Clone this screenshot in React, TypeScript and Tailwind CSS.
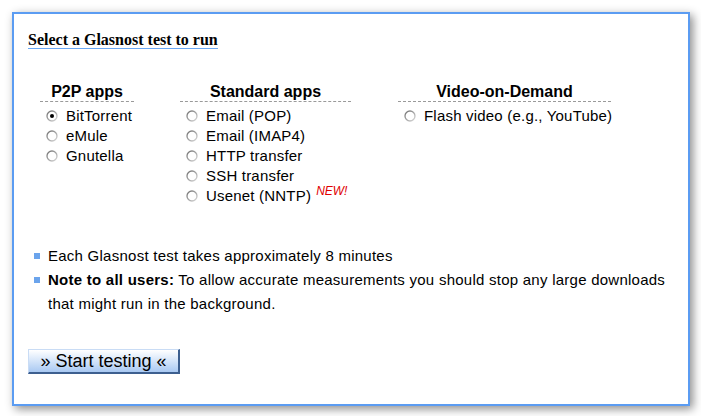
import React from "react";

type Option = { label: string; checked?: boolean; isNew?: boolean };

const columns: { title: string; width: string; gap: string; options: Option[] }[] = [
  {
    title: "P2P apps",
    width: "w-[94px]",
    gap: "ml-0",
    options: [{ label: "BitTorrent", checked: true }, { label: "eMule" }, { label: "Gnutella" }],
  },
  {
    title: "Standard apps",
    width: "w-[171px]",
    gap: "ml-[46px]",
    options: [
      { label: "Email (POP)" },
      { label: "Email (IMAP4)" },
      { label: "HTTP transfer" },
      { label: "SSH transfer" },
      { label: "Usenet (NNTP)", isNew: true },
    ],
  },
  {
    title: "Video-on-Demand",
    width: "w-[213px]",
    gap: "ml-[47px]",
    options: [{ label: "Flash video (e.g., YouTube)" }],
  },
];

function Radio({ checked }: { checked?: boolean }) {
  return (
    <svg width="12" height="12" viewBox="0 0 12 12" className="shrink-0">
      <defs>
        <linearGradient id="rim" x1="0" y1="0" x2="1" y2="1">
          <stop offset="0" stopColor="#6e6e6e" />
          <stop offset="1" stopColor="#dadada" />
        </linearGradient>
      </defs>
      <circle cx="6" cy="6" r="5" fill="#fff" stroke="url(#rim)" strokeWidth="1.3" />
      {checked && <circle cx="6" cy="6" r="2" fill="#000" />}
    </svg>
  );
}

export default function App() {
  return (
    <div className="h-[416px] w-[701px] bg-white p-3 font-['Liberation_Sans',Arial,sans-serif] text-black">
      <div className="h-[394px] w-[678px] border-2 border-[#5b9cf2] bg-white pl-[14px] pr-[14px] pt-[17px] shadow-[3px_3px_9px_rgba(0,0,0,0.45)]">
        <div className="w-fit border-b border-b-[#6aa8f5] font-['Liberation_Serif','Times_New_Roman',serif] text-[16px] font-bold leading-[17px]">
          Select a Glasnost test to run
        </div>

        <div className="ml-3 mt-[33px] flex items-start">
          {columns.map((col) => (
            <div key={col.title} className={`${col.width} ${col.gap}`}>
              <div className="border-b border-dashed border-b-[#9a9a9a] text-center text-[16px] font-bold leading-[19px]">
                {col.title}
              </div>
              <ul className="pt-1">
                {col.options.map((opt) => (
                  <li
                    key={opt.label}
                    className="flex h-5 items-center gap-2 pl-[6px] text-[15px] leading-5 tracking-[0.2px]"
                  >
                    <Radio checked={opt.checked} />
                    <span className="whitespace-nowrap">
                      {opt.label}
                      {opt.isNew && (
                        <sup className="ml-[5px] text-[12px] italic tracking-normal text-[#e00000]">NEW!</sup>
                      )}
                    </span>
                  </li>
                ))}
              </ul>
            </div>
          ))}
        </div>

        <ul className="ml-[6px] mt-[38px] text-[15px] leading-6 tracking-[0.25px]">
          <li className="flex items-start gap-2">
            <span className="mt-[9px] h-[6px] w-[6px] shrink-0 bg-[#6ba4ec]" />
            <span>Each Glasnost test takes approximately 8 minutes</span>
          </li>
          <li className="flex items-start gap-2">
            <span className="mt-[9px] h-[6px] w-[6px] shrink-0 bg-[#6ba4ec]" />
            <span className="w-[620px]">
              <b>Note to all users:</b> To allow accurate measurements you should stop any large downloads
              that might run in the background.
            </span>
          </li>
        </ul>

        <button className="mt-[33px] h-[25px] w-[152px] border border-b-2 border-r-2 border-[#c9dcf5] border-b-[#3d5f8f] border-r-[#3d5f8f] bg-gradient-to-b from-white to-[#a9c9f2] text-[18px] leading-[22px] text-black">
          » Start testing «
        </button>
      </div>
    </div>
  );
}
